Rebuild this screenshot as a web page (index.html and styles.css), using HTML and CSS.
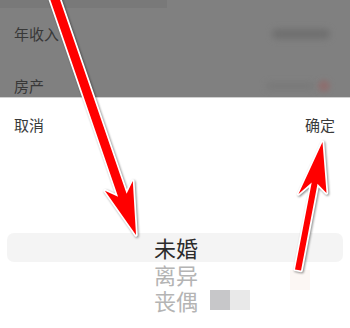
FILE: index.html
```html
<!DOCTYPE html>
<html lang="zh">
<head>
<meta charset="utf-8">
<link rel="stylesheet" href="styles.css">
</head>
<body>
<div class="screen">
  <div class="form">
    <div class="strip"></div>
    <div class="row">
      <span class="label">年收入</span>
      <span class="value"><span class="blur-text"></span></span>
    </div>
    <div class="row">
      <span class="label">房产</span>
      <span class="value"><span class="blur-text short"></span><span class="blur-dot"></span></span>
    </div>
  </div>
  <div class="sheet">
    <div class="sheet-head">
      <span class="btn">取消</span>
      <span class="btn">确定</span>
    </div>
    <div class="picker">
      <div class="item selected">未婚</div>
      <div class="item">离异</div>
      <div class="item">丧偶<span class="redact"><span class="r1"></span><span class="r2"></span></span></div>
      <span class="mark"></span>
    </div>
  </div>
  <svg class="arrows" width="350" height="328" viewBox="0 0 350 328">
    <polygon class="arrow" points="49.2,-3.5 118.1,196.8 104.9,190.7 136,235 132.8,181.1 126.6,193.8 57.8,-6.5"/>
    <polygon class="arrow" points="295,269.4 311.7,182.6 298.5,194 322.5,142 326.5,193 317.5,183.8 301,270.6"/>
  </svg>
</div>
</body>
</html>
```

FILE: styles.css
```css
* { box-sizing: border-box; }
html, body { margin: 0; padding: 0; background: #fff; }
body {
  width: 350px;
  height: 328px;
  overflow: hidden;
  font-family: "Noto Sans CJK SC", "Noto Sans", sans-serif;
}
.screen {
  position: relative;
  width: 350px;
  height: 328px;
  display: flex;
  flex-direction: column;
}
.form {
  height: 97px;
  background: #808080;
  overflow: hidden;
  display: flex;
  flex-direction: column;
  flex-shrink: 0;
}
.strip {
  width: 167px;
  height: 8px;
  background: #797979;
  flex-shrink: 0;
}
.row {
  height: 52px;
  flex-shrink: 0;
  display: flex;
  align-items: center;
  justify-content: space-between;
  padding: 0 20px 0 14px;
}
.label {
  font-size: 15px;
  color: #383838;
  line-height: 20px;
}
.value {
  display: flex;
  align-items: center;
  gap: 4px;
}
.blur-text {
  width: 58px;
  height: 10px;
  background: #6f6f6f;
  border-radius: 5px;
  filter: blur(3px);
}
.blur-text.short {
  width: 48px;
  height: 6px;
  background: #777;
}
.blur-dot {
  width: 12px;
  height: 12px;
  border-radius: 50%;
  background: #8c6f6f;
  filter: blur(2.5px);
}
.sheet {
  flex: 1;
  background: #fff;
  border-top: 1px solid #d0d0d0;
  display: flex;
  flex-direction: column;
}
.sheet-head {
  height: 54px;
  display: flex;
  align-items: center;
  justify-content: space-between;
  padding: 0 15px 0 14px;
}
.btn {
  font-size: 15px;
  color: #3a3a3a;
  line-height: 20px;
}
.picker {
  position: relative;
  padding-top: 81px;
  display: flex;
  flex-direction: column;
}
.item {
  position: relative;
  height: 26px;
  margin: 0 7px;
  display: flex;
  align-items: center;
  justify-content: center;
  font-size: 22px;
  line-height: 26px;
  color: #b4b4b4;
  padding: 0 0 2px 2px;
}
.item.selected {
  height: 29px;
  background: #f4f4f4;
  border-radius: 7px;
  color: #2c2c2c;
  padding-bottom: 1px;
}
.redact {
  position: absolute;
  left: 203px;
  top: 2px;
  display: flex;
}
.r1 { width: 20px; height: 20px; background: #c7c7c9; }
.r2 { width: 20px; height: 20px; background: #e9e9e9; }
.mark {
  position: absolute;
  left: 290px;
  top: 118px;
  width: 20px;
  height: 20px;
  background: #fcf7f4;
}
.arrows {
  position: absolute;
  left: 0;
  top: 0;
  pointer-events: none;
}
.arrow {
  fill: #ff0000;
  stroke: #ffffff;
  stroke-width: 3.5;
  stroke-linejoin: round;
  paint-order: stroke fill;
  filter: drop-shadow(1.5px 1px 1px rgba(0, 0, 0, 0.45));
}
```
